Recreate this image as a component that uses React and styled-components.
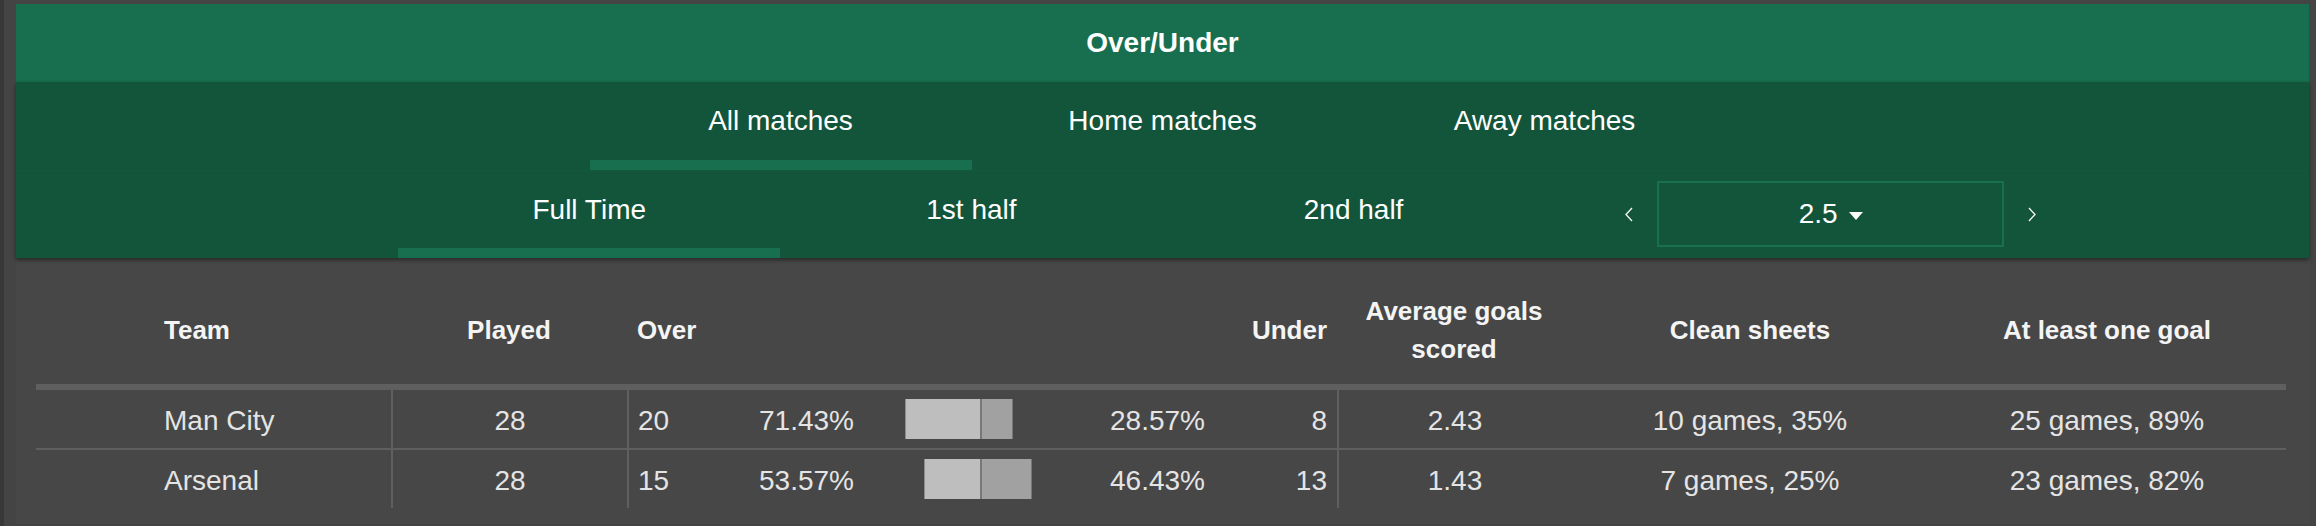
import React, { useState } from 'react';
import styled, { createGlobalStyle } from 'styled-components';

const GlobalStyle = createGlobalStyle`
  body {
    margin: 0;
    background: #444444;
    font-family: "Liberation Sans", Helvetica, Arial, sans-serif;
  }
`;

const Page = styled.div`
  border-left: 4px solid #383838;
  padding: 4px 7px 0 12px;
  min-height: 522px;
`;

const Card = styled.div`
  display: flex;
  flex-direction: column;
`;

const Title = styled.div`
  height: 78px;
  background: #176f4f;
  color: #fff;
  font-size: 28px;
  font-weight: 700;
  display: flex;
  align-items: center;
  justify-content: center;
`;

const Nav = styled.div`
  background: #13553b;
  box-shadow: 0 2px 4px rgba(0, 0, 0, 0.45);
  position: relative;
  z-index: 1;
`;

const VenueRow = styled.div`
  height: 88px;
  display: flex;
  justify-content: center;
`;

const PeriodRow = styled.div`
  height: 88px;
  display: grid;
  grid-template-columns: repeat(6, 1fr);
  border-top: 1px solid #14583e;
  box-sizing: border-box;
`;

const Tab = styled.div`
  width: 382px;
  box-sizing: border-box;
  display: flex;
  align-items: center;
  justify-content: center;
  color: #fff;
  font-size: 28px;
  border-bottom: 10px solid ${({ active }) => (active ? '#176f4f' : 'transparent')};
  cursor: pointer;
`;

const PeriodTab = styled(Tab)`
  width: auto;
  grid-column: ${({ col }) => col};
`;

const LineSelect = styled.div`
  grid-column: 5 / span 2;
  width: 572px;
  display: flex;
  align-items: center;
  justify-content: center;
  gap: 24px;
  margin-top: -1px;
`;

const Arrow = styled.button`
  background: none;
  border: 0;
  padding: 0;
  display: flex;
  cursor: pointer;
`;

const LineBox = styled.div`
  width: 347px;
  height: 66px;
  box-sizing: border-box;
  border: 2px solid #187050;
  display: flex;
  align-items: center;
  justify-content: center;
  gap: 11px;
  color: #fff;
  font-size: 28px;
`;

const Caret = styled.span`
  width: 0;
  height: 0;
  border-left: 7px solid transparent;
  border-right: 7px solid transparent;
  border-top: 8px solid #fff;
  margin-top: 4px;
`;

const TablePanel = styled.div`
  background: #474747;
  padding: 18px 24px 16px 20px;
  margin-right: -1px;
`;

const Row = styled.div`
  display: grid;
  grid-template-columns: 355px 236px 100px 127px 256px 127px 100px 234px 358px 356px;
  height: ${({ head }) => (head ? '108px' : '58px')};
  border-bottom: ${({ head, last }) =>
    head ? '6px solid #5f5f5f' : last ? '0' : '2px solid #5f5f5f'};
`;

const HeadCell = styled.div`
  display: flex;
  align-items: center;
  justify-content: ${({ align }) =>
    align === 'left' ? 'flex-start' : align === 'right' ? 'flex-end' : 'center'};
  text-align: center;
  grid-column: ${({ span }) => (span ? `span ${span}` : 'auto')};
  padding: ${({ pad }) => pad || '0'};
  color: #f4f4f4;
  font-size: 26px;
  font-weight: 700;
  line-height: 38px;
`;

const Cell = styled.div`
  display: flex;
  align-items: center;
  justify-content: ${({ align }) =>
    align === 'left' ? 'flex-start' : align === 'right' ? 'flex-end' : 'center'};
  padding: 3px ${({ padRight }) => padRight || 0}px 0 ${({ padLeft }) => padLeft || 0}px;
  border-left: ${({ divider }) => (divider ? '2px solid #5f5f5f' : '0')};
  color: #e4e4e4;
  font-size: 28px;
`;

const BarCell = styled.div`
  display: flex;
  align-items: center;
  justify-content: center;
`;

const Bar = styled.div`
  display: flex;
  width: 216px;
  height: 40px;
`;

const BarHalf = styled.div`
  width: 108px;
  display: flex;
  justify-content: ${({ side }) => (side === 'left' ? 'flex-end' : 'flex-start')};
`;

const OverPart = styled.div`
  background: #bebebe;
  box-sizing: border-box;
  border-left: 1px solid #8c8c8c;
  border-right: 2px solid #787878;
`;

const UnderPart = styled.div`
  background: #a1a1a1;
  box-sizing: border-box;
  border-right: 1px solid #777777;
`;

const teams = [
  { name: 'Man City', played: 28, over: 20, under: 8, avg: '2.43', clean: '10 games, 35%', scored: '25 games, 89%' },
  { name: 'Arsenal', played: 28, over: 15, under: 13, avg: '1.43', clean: '7 games, 25%', scored: '23 games, 82%' },
];

const Chevron = ({ dir }) => (
  <svg width="8" height="15" viewBox="0 0 8 15">
    <polyline
      points={dir === 'left' ? '7,1 1,7.5 7,14' : '1,1 7,7.5 1,14'}
      fill="none"
      stroke="#f2f2f2"
      strokeWidth="1.4"
    />
  </svg>
);

const pct = (n, total) => ((n / total) * 100).toFixed(2) + '%';

const App = () => {
  const [venue, setVenue] = useState('All matches');
  const [period, setPeriod] = useState('Full Time');

  return (
    <>
      <GlobalStyle />
      <Page>
        <Card>
          <Title>Over/Under</Title>
          <Nav>
            <VenueRow>
              {['All matches', 'Home matches', 'Away matches'].map((v) => (
                <Tab key={v} active={venue === v} onClick={() => setVenue(v)}>
                  {v}
                </Tab>
              ))}
            </VenueRow>
            <PeriodRow>
              {['Full Time', '1st half', '2nd half'].map((p, i) => (
                <PeriodTab key={p} col={i + 2} active={period === p} onClick={() => setPeriod(p)}>
                  {p}
                </PeriodTab>
              ))}
              <LineSelect>
                <Arrow><Chevron dir="left" /></Arrow>
                <LineBox>
                  2.5
                  <Caret />
                </LineBox>
                <Arrow><Chevron dir="right" /></Arrow>
              </LineSelect>
            </PeriodRow>
          </Nav>
          <TablePanel>
            <Row head>
              <HeadCell align="left" pad="0 0 0 128px">Team</HeadCell>
              <HeadCell>Played</HeadCell>
              <HeadCell align="left" span={2} pad="0 0 0 10px">Over</HeadCell>
              <HeadCell />
              <HeadCell align="right" span={2} pad="0 10px 0 0">Under</HeadCell>
              <HeadCell pad="0 20px">Average goals scored</HeadCell>
              <HeadCell>Clean sheets</HeadCell>
              <HeadCell>At least one goal</HeadCell>
            </Row>
            {teams.map((t, i) => {
              const overShare = t.over / t.played;
              const underShare = t.under / t.played;
              return (
                <Row key={t.name} last={i === teams.length - 1}>
                  <Cell align="left" padLeft={128}>{t.name}</Cell>
                  <Cell divider>{t.played}</Cell>
                  <Cell divider align="left" padLeft={9}>{t.over}</Cell>
                  <Cell align="right">{pct(t.over, t.played)}</Cell>
                  <BarCell>
                    <Bar>
                      <BarHalf side="left">
                        <OverPart style={{ width: `${overShare * 108}px` }} />
                      </BarHalf>
                      <BarHalf side="right">
                        <UnderPart style={{ width: `${underShare * 108}px` }} />
                      </BarHalf>
                    </Bar>
                  </BarCell>
                  <Cell align="left">{pct(t.under, t.played)}</Cell>
                  <Cell align="right" padRight={10}>{t.under}</Cell>
                  <Cell divider>{t.avg}</Cell>
                  <Cell>{t.clean}</Cell>
                  <Cell>{t.scored}</Cell>
                </Row>
              );
            })}
          </TablePanel>
        </Card>
      </Page>
    </>
  );
};

export default App;
